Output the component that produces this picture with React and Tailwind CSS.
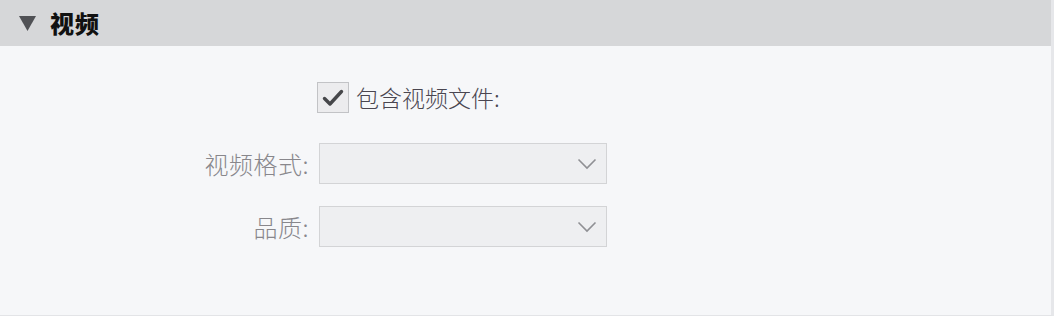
import React from "react";

function Chevron() {
  return (
    <svg width="20" height="12" viewBox="0 0 20 12" className="shrink-0">
      <path d="M1.5 1.5 L10 10 L18.5 1.5" fill="none" stroke="#8f9094" strokeWidth="1.6" />
    </svg>
  );
}

function Select() {
  return (
    <div className="w-[288px] h-[41px] bg-[#eeeff1] border border-[#d3d4d6] flex items-center justify-end pr-[9px]">
      <Chevron />
    </div>
  );
}

export default function App() {
  return (
    <div
      className="w-[1054px] h-[316px] bg-[#f6f7f9] border-r-[3px] border-r-[#e6e7ea] border-b border-b-[#e3e4e7] flex flex-col"
      style={{ fontFamily: '"Noto Sans CJK SC", "Noto Sans", sans-serif' }}
    >
      <div className="h-[46px] bg-[#d6d7d9] flex items-center pl-[19px] gap-[14px] shrink-0">
        <svg width="17" height="15" viewBox="0 0 17 15">
          <path d="M0 0 H17 L8.5 15 Z" fill="#505155" />
        </svg>
        <span className="text-[24px] font-black text-[#111111] leading-none tracking-[1px]">视频</span>
      </div>
      <div className="grid grid-cols-[314px_288px] gap-x-[5px] pt-[36px] items-center">
        <div />
        <label className="flex items-center gap-[7px] -ml-[2px] h-[31px]">
          <span className="w-[32px] h-[31px] bg-[#ececee] border border-[#c2c3c6] flex items-center justify-center">
            <svg width="22" height="18" viewBox="0 0 22 18">
              <path d="M2.5 9.5 L8 15 L19.5 2.5" fill="none" stroke="#46474a" strokeWidth="3.4" strokeLinecap="round" strokeLinejoin="round" />
            </svg>
          </span>
          <span className="text-[23px] font-light text-[#4a4650] leading-none whitespace-nowrap">包含视频文件:</span>
        </label>

        <span className="mt-[30px] pr-[5px] text-right text-[24px] font-light tracking-[0.5px] text-[#88878c] leading-none whitespace-nowrap">视频格式:</span>
        <div className="mt-[30px]">
          <Select />
        </div>

        <span className="mt-[22px] pr-[5px] text-right text-[24px] font-light tracking-[0.5px] text-[#88878c] leading-none whitespace-nowrap">品质:</span>
        <div className="mt-[22px]">
          <Select />
        </div>
      </div>
    </div>
  );
}
